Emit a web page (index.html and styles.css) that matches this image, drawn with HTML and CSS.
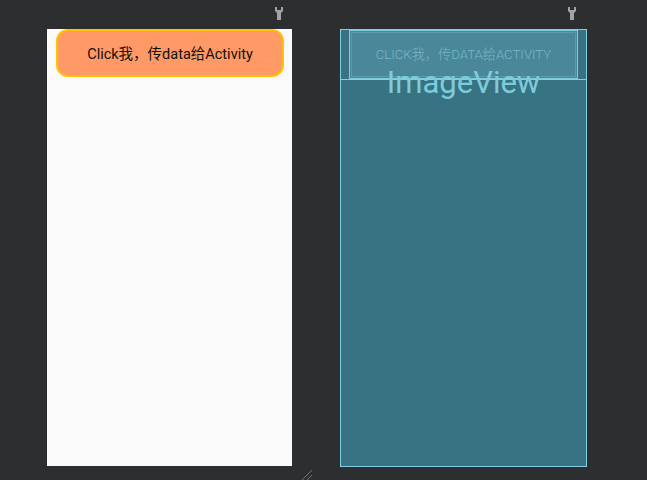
FILE: index.html
```html
<!DOCTYPE html>
<html>
<head>
<meta charset="utf-8">
<link rel="stylesheet" href="styles.css">
</head>
<body>
<div class="canvas">
  <div class="column col-design">
    <div class="toolbar">
      <svg class="wrench" width="8" height="13" viewBox="0 0 8 13"><path d="M0 0.5 Q0 0 0.5 0 H2 V3 H6 V0 H7.5 Q8 0 8 0.5 V4 L6 6 V13 H2 V6 L0 4 Z" fill="#a3a3a3"/></svg>
    </div>
    <div class="screen design">
      <div class="btn">Click我，传data给Activity</div>
    </div>
  </div>
  <div class="column col-blueprint">
    <div class="toolbar">
      <svg class="wrench" width="8" height="13" viewBox="0 0 8 13"><path d="M0 0.5 Q0 0 0.5 0 H2 V3 H6 V0 H7.5 Q8 0 8 0.5 V4 L6 6 V13 H2 V6 L0 4 Z" fill="#a3a3a3"/></svg>
    </div>
    <div class="screen blueprint">
      <div class="bp-top">
        <div class="bp-btn">CLICK我，传DATA给ACTIVITY</div>
      </div>
      <div class="bp-label">ImageView</div>
    </div>
  </div>
  <svg class="resize" width="12" height="12" viewBox="0 0 12 12"><path d="M1 11 L11 1 M6 11 L11 6" stroke="#777" stroke-width="1" fill="none"/></svg>
</div>
</body>
</html>
```
FILE: styles.css
```css
html, body {
  margin: 0;
  padding: 0;
  background: #2d2e30;
  width: 647px;
  height: 480px;
  overflow: hidden;
  font-family: Roboto, "Noto Sans CJK SC", sans-serif;
}
.canvas {
  position: relative;
  display: flex;
  gap: 48px;
  padding-left: 47px;
  height: 480px;
}
.column {
  display: flex;
  flex-direction: column;
}
.toolbar {
  height: 29px;
  display: flex;
  justify-content: flex-end;
  align-items: flex-start;
}
.col-design .toolbar { padding-right: 9px; }
.col-blueprint .toolbar { padding-right: 11px; }
.wrench { margin-top: 7px; }
.screen {
  box-sizing: border-box;
  height: 437px;
}
.design {
  width: 245px;
  background: #fafafa;
  padding: 0 8px 0 9px;
}
.btn {
  box-sizing: border-box;
  height: 48px;
  background: #ff9966;
  border: 2px solid #ffc107;
  border-radius: 12px;
  display: flex;
  align-items: center;
  justify-content: center;
  font-size: 14.5px;
  color: #111;
  padding-bottom: 1px;
}
.blueprint {
  position: relative;
  width: 247px;
  height: 438px;
  background: #387383;
  border: 1px solid #7fd0e2;
}
.bp-top {
  box-sizing: border-box;
  height: 50px;
  border-bottom: 1px solid #7fd0e2;
  padding: 0 8px;
}
.bp-btn {
  box-sizing: border-box;
  height: 49px;
  background: #4a8798;
  border: 1px solid #7fcbdc;
  outline: 1px solid #5c9aaa;
  outline-offset: -3px;
  display: flex;
  align-items: center;
  justify-content: center;
  font-size: 13.2px;
  font-weight: 300;
  color: #76b8c8;
  padding-bottom: 2px;
}
.bp-label {
  position: absolute;
  left: 0;
  right: 0;
  top: 33px;
  text-align: center;
  font-size: 31px;
  color: #7ecbdc;
  line-height: 40px;
}
.resize {
  position: absolute;
  left: 301px;
  top: 469px;
}
```
